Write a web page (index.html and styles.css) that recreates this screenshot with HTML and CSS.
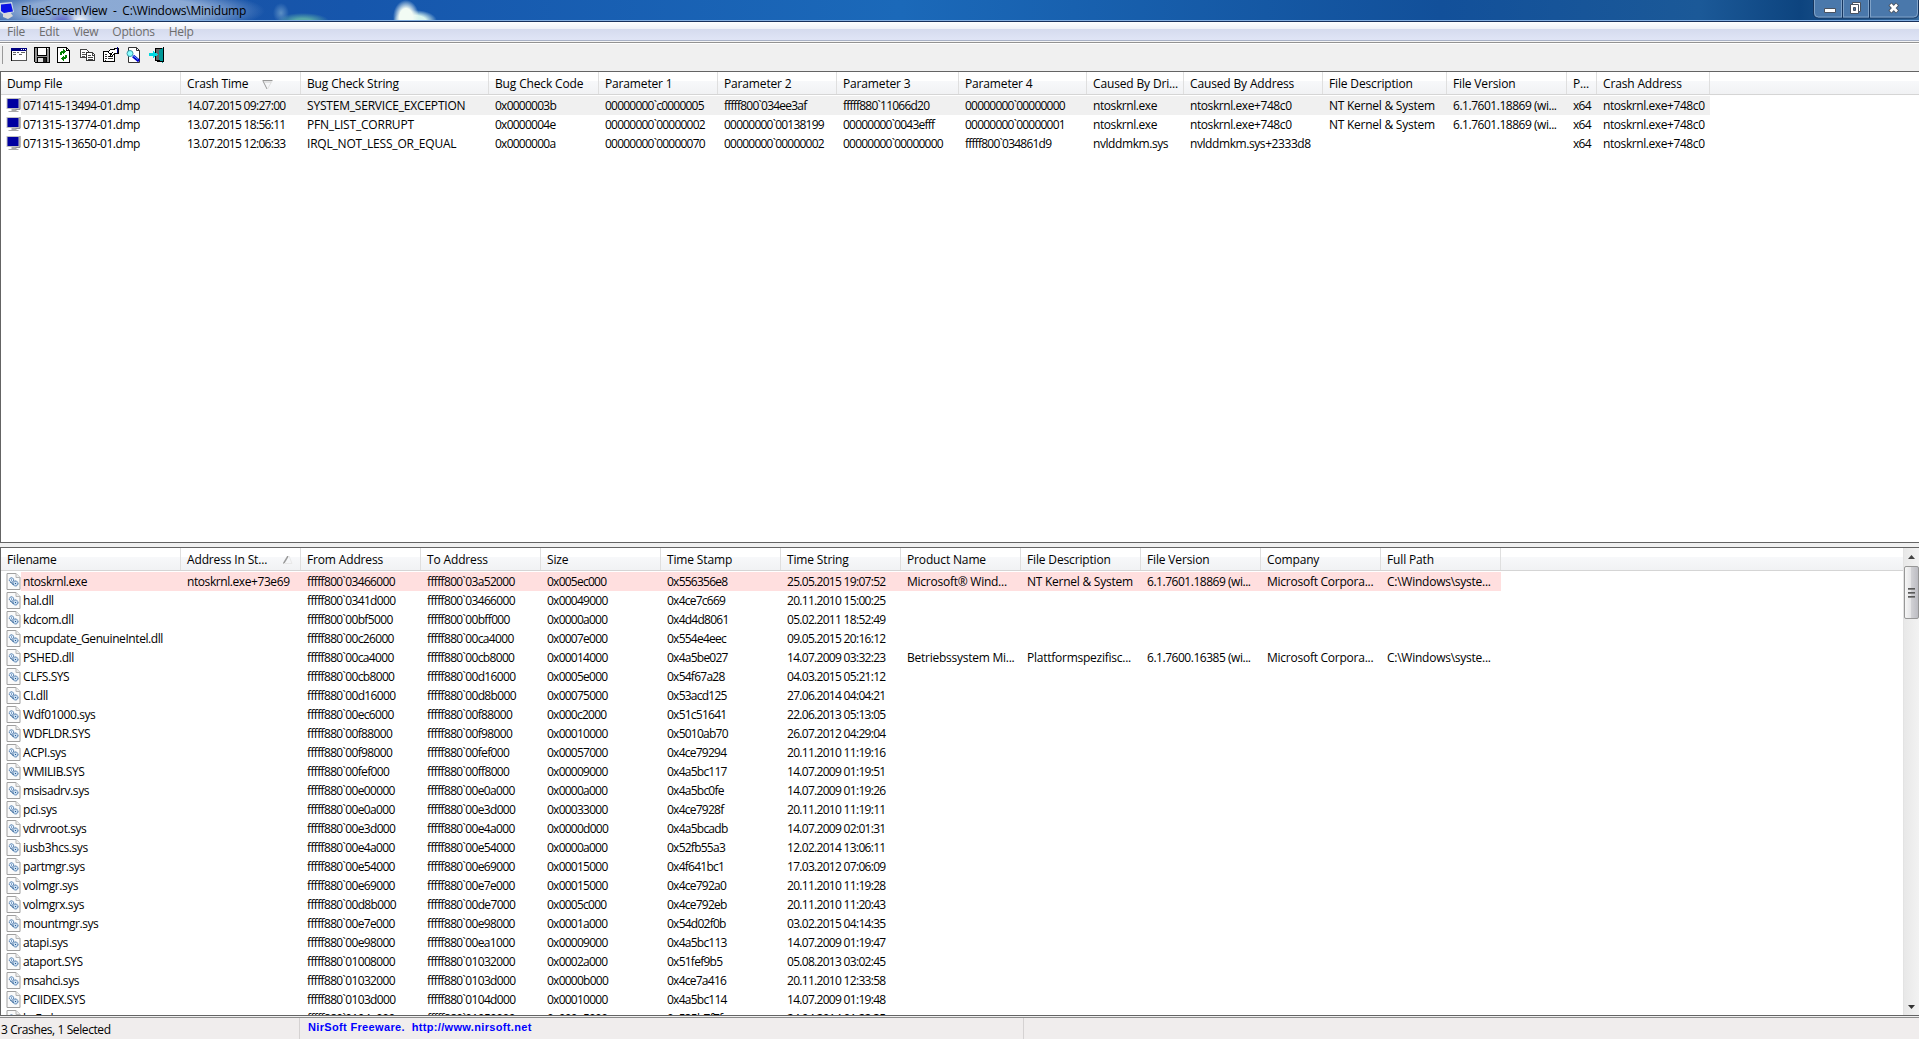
FILE: index.html
```html
<html>
<head>
    <meta charset="utf-8">
    <title>BlueScreenView</title>
    <link rel="stylesheet" href="styles.css">
</head>
<body>
    <svg class="sprites">
        <symbol id="monitor" viewBox="0 0 14 15">
            <path d="M0 0h14v11H0z" fill="#c0c0c0"/>
            <path d="M1 1h11v9H1z" fill="#0000a0"/>
            <path d="M5 11h5v2h2v1H2v-1h3z" fill="#aaa"/>
            <path d="M13.500 0v11.500H9" stroke="#909090" fill="none"/>
        </symbol>
        <symbol id="dll" viewBox="0 0 14 17">
            <path d="M.5.5h9l4 4v12H.5z" fill="#fafafa" stroke="#a0a0a0"/>
            <path d="M9.500.5v4h4" fill="#eee" stroke="#b4b4b4"/>
            <circle cx="5" cy="7" r="2.200" fill="#e6f2ff" stroke="#2b609a" stroke-dasharray="1.300 .5"/>
            <circle cx="9" cy="10.500" r="2.500" fill="#c9ddf0" stroke="#2b609a" stroke-dasharray="1.300 .5"/>
            <path d="M5 6.500v1M8.500 10.500h1M4 9l3 3" stroke="#275b93"/>
        </symbol>
    </svg>

    <div class="titlebar">
        <svg class="app-icon" width="15" height="19" viewBox="0 0 15 19">
            <path d="M0 3L12 2l2 10-10 3-4-3z" fill="#c9d6e8"/>
            <path d="M1 4.500L11 3.500l2 8L4 13 1 11z" fill="#0a12e4"/>
            <path d="M3 14l7-2 3 4-5 3-5-2z" fill="#d8d8d8"/>
        </svg>
        <span class="title">BlueScreenView&nbsp; -&nbsp; C:\Windows\Minidump</span>
        <svg class="win-buttons" width="106" height="20" viewBox="0 0 106 20">
            <path d="M.5 0v13q0 5 5 5h95q5 0 5-5V0" fill="#4a78ab" stroke="#17365f"/>
            <path d="M1.500 0v13q0 4 4 4h95q4 0 4-4V0M28.500 0v17M30.500 0v17M55.500 0v17M57.500 0v17" fill="none" stroke="#7fa2c8"/>
            <path d="M29.500 0v18M56.500 0v18" stroke="#17365f"/>
            <path d="M11.500 8.500h11v4h-11z" fill="#fff" stroke="#4a5361"/>
            <path d="M39.500 2.500h8v9h-8z" fill="#fff" stroke="#4a5361"/>
            <path d="M37.500 4.500h8v9h-8z" fill="#fff" stroke="#4a5361"/>
            <path d="M40.500 7.500h2v3h-2z" fill="#4a78ab" stroke="#4a5361"/>
            <path d="M77 4l7.500 8M84.500 4L77 12" stroke="#4a5361" stroke-width="4.500"/>
            <path d="M77.500 4.500l6.500 7M84 4.500l-6.500 7" stroke="#fff" stroke-width="2.600"/>
        </svg>
    </div>

    <div class="menubar">
        <span>File</span>
        <span>Edit</span>
        <span>View</span>
        <span>Options</span>
        <span>Help</span>
    </div>

    <div class="toolbar">
        <svg width="16" height="16" shape-rendering="crispEdges">
            <path d="M.5 1.500h15v12H.5z" fill="#fff" stroke="#000"/>
            <path d="M0 1h16v3H0z" fill="#000080"/>
            <path d="M15.500 3v11M1 13.500h15" stroke="#555"/>
            <path d="M2 5.500h3M6 5.500h2M10 5.500h4M2 7.500h3M8 7.500h3" stroke="#666"/>
            <path d="M10 2.500h1M12 2.500h1M14 2.500h1" stroke="#fff"/>
        </svg>
        <svg width="16" height="16" shape-rendering="crispEdges">
            <path d="M0 0h16v16H1L0 15z" fill="#000"/>
            <path d="M1 1h2v8h10V1h2v14H1z" fill="#909090"/>
            <path d="M4 0h8v8H4z" fill="#fff"/>
            <path d="M4 .5h8" stroke="#000"/>
            <path d="M3.500 10.500h9v5h-9z" fill="#ddd" stroke="#000"/>
            <path d="M9 11h3v4H9z" fill="#222"/>
            <path d="M13 1h1v1h-1z" fill="#fff"/>
        </svg>
        <svg width="16" height="16" shape-rendering="crispEdges">
            <path d="M.5.5h9l3 3v12H.5z" fill="#fff" stroke="#000"/>
            <path d="M9.500 0v3.500H13" fill="none" stroke="#000"/>
            <path d="M3 8V5h1V4h2V2h1v1h1v1h1v1H8v1H7v1H6V6H5v2zM10 8v3H9v1H7v2H6v-1H5v-1H4v-1h1v-1h1V9h1v1h1V8z" fill="#008000"/>
        </svg>
        <svg width="16" height="16" shape-rendering="crispEdges">
            <path d="M.5 2.500h6l2 2v6h-8z" fill="#fff" stroke="#444"/>
            <path d="M2 5.500h3M2 7.500h4M2 9.500h3" stroke="#555"/>
            <path d="M6.500 5.500h6l2 2v6h-8z" fill="#fff" stroke="#333"/>
            <path d="M8 8.500h3M8 10.500h5M8 12.500h5M12.500 5v3H15" stroke="#444" fill="none"/>
        </svg>
        <svg width="16" height="16" shape-rendering="crispEdges">
            <path d="M.5 4.500h11v10H.5z" fill="#fff" stroke="#000"/>
            <path d="M2 7.500h2M5 9.500h5M2 9.500h2M2 11.500h2M5 11.500h5M2 13.500h1" stroke="#333"/>
            <path d="M5 5l3-3h3V1h4v5h-3L9 9H7l2-3-2 1z" fill="#fff" stroke="#000"/>
            <path d="M14 0h1v6h-1z" fill="#000080"/>
        </svg>
        <svg width="16" height="16">
            <path d="M2.500.5h8l3 3v12h-11z" fill="#fff" stroke="#333"/>
            <path d="M10.500.5v3h3" fill="none" stroke="#333"/>
            <circle cx="4" cy="6.500" r="3" fill="#8ff" stroke="#3a9aa8"/>
            <path d="M7 9l6 5" stroke="#0000d0" stroke-width="3"/>
            <path d="M7 8.500l5 4" stroke="#58b0f0"/>
        </svg>
        <svg width="16" height="16" shape-rendering="crispEdges">
            <path d="M6.500 1.500h7v12h-7z" fill="#666" stroke="#000"/>
            <path d="M10 3l4-2v15l-4-3z" fill="#009898"/>
            <path d="M14.500 0v14M8 14.500h7" stroke="#000"/>
            <path d="M0 6h4V4l5 3.500L4 11V9H0z" fill="#00d8e0"/>
        </svg>
    </div>

    <div class="list crashes">
        <div class="header" id="crash-header"></div>
        <div class="rows" id="crash-rows"></div>
    </div>

    <div class="splitter"></div>

    <div class="list drivers">
        <div class="pane">
            <div class="header" id="driver-header"></div>
            <div class="rows" id="driver-rows"></div>
        </div>
        <div class="scrollbar">
            <svg width="7" height="4"><path d="M0 4L3.500 0 7 4z" fill="#444"/></svg>
            <div class="thumb"><i></i><i></i><i></i></div>
            <svg class="down" width="7" height="4"><path d="M0 0l3.500 4L7 0z" fill="#333"/></svg>
        </div>
    </div>

    <div class="statusbar">
        <div class="status-count">3 Crashes, 1 Selected</div>
        <div class="status-link">NirSoft Freeware.&nbsp; http://www.nirsoft.net</div>
        <div class="status-rest"></div>
    </div>

    <script src="lists.js"></script>
</body>
</html>
```

FILE: lists.js
```js
// title, column width, cell class
var crashColumns = [
    ["Dump File", 180, "dump"],
    ["Crash Time", 120, "time"],
    ["Bug Check String", 188, "bugcheck"],
    ["Bug Check Code", 110, "hex"],
    ["Parameter 1", 119, "addr"],
    ["Parameter 2", 119, "addr"],
    ["Parameter 3", 122, "addr"],
    ["Parameter 4", 128, "addr"],
    ["Caused By Dri...", 97, "module"],
    ["Caused By Address", 139, "module"],
    ["File Description", 124, "text"],
    ["File Version", 120, "version"],
    ["P...", 30, "hex"],
    ["Crash Address", 113, "module"]
];

var crashes = [
    "071415-13494-01.dmp|14.07.2015 09:27:00|SYSTEM_SERVICE_EXCEPTION|0x0000003b|00000000`c0000005|fffff800`034ee3af|fffff880`11066d20|00000000`00000000|ntoskrnl.exe|ntoskrnl.exe+748c0|NT Kernel & System|6.1.7601.18869 (wi...|x64|ntoskrnl.exe+748c0",
    "071315-13774-01.dmp|13.07.2015 18:56:11|PFN_LIST_CORRUPT|0x0000004e|00000000`00000002|00000000`00138199|00000000`0043efff|00000000`00000001|ntoskrnl.exe|ntoskrnl.exe+748c0|NT Kernel & System|6.1.7601.18869 (wi...|x64|ntoskrnl.exe+748c0",
    "071315-13650-01.dmp|13.07.2015 12:06:33|IRQL_NOT_LESS_OR_EQUAL|0x0000000a|00000000`00000070|00000000`00000002|00000000`00000000|fffff800`034861d9|nvlddmkm.sys|nvlddmkm.sys+2333d8|||x64|ntoskrnl.exe+748c0"
];

var driverColumns = [
    ["Filename", 180, "module"],
    ["Address In St...", 120, "module"],
    ["From Address", 120, "addr"],
    ["To Address", 120, "addr"],
    ["Size", 120, "hex"],
    ["Time Stamp", 120, "hex"],
    ["Time String", 120, "time"],
    ["Product Name", 120, "text"],
    ["File Description", 120, "text"],
    ["File Version", 120, "version"],
    ["Company", 120, "text"],
    ["Full Path", 120, "text"]
];

var drivers = [
    "ntoskrnl.exe|ntoskrnl.exe+73e69|fffff800`03466000|fffff800`03a52000|0x005ec000|0x556356e8|25.05.2015 19:07:52|Microsoft® Wind...|NT Kernel & System|6.1.7601.18869 (wi...|Microsoft Corpora...|C:\\Windows\\syste...",
    "hal.dll||fffff800`0341d000|fffff800`03466000|0x00049000|0x4ce7c669|20.11.2010 15:00:25",
    "kdcom.dll||fffff800`00bf5000|fffff800`00bff000|0x0000a000|0x4d4d8061|05.02.2011 18:52:49",
    "mcupdate_GenuineIntel.dll||fffff880`00c26000|fffff880`00ca4000|0x0007e000|0x554e4eec|09.05.2015 20:16:12",
    "PSHED.dll||fffff880`00ca4000|fffff880`00cb8000|0x00014000|0x4a5be027|14.07.2009 03:32:23|Betriebssystem Mi...|Plattformspezifisc...|6.1.7600.16385 (wi...|Microsoft Corpora...|C:\\Windows\\syste...",
    "CLFS.SYS||fffff880`00cb8000|fffff880`00d16000|0x0005e000|0x54f67a28|04.03.2015 05:21:12",
    "CI.dll||fffff880`00d16000|fffff880`00d8b000|0x00075000|0x53acd125|27.06.2014 04:04:21",
    "Wdf01000.sys||fffff880`00ec6000|fffff880`00f88000|0x000c2000|0x51c51641|22.06.2013 05:13:05",
    "WDFLDR.SYS||fffff880`00f88000|fffff880`00f98000|0x00010000|0x5010ab70|26.07.2012 04:29:04",
    "ACPI.sys||fffff880`00f98000|fffff880`00fef000|0x00057000|0x4ce79294|20.11.2010 11:19:16",
    "WMILIB.SYS||fffff880`00fef000|fffff880`00ff8000|0x00009000|0x4a5bc117|14.07.2009 01:19:51",
    "msisadrv.sys||fffff880`00e00000|fffff880`00e0a000|0x0000a000|0x4a5bc0fe|14.07.2009 01:19:26",
    "pci.sys||fffff880`00e0a000|fffff880`00e3d000|0x00033000|0x4ce7928f|20.11.2010 11:19:11",
    "vdrvroot.sys||fffff880`00e3d000|fffff880`00e4a000|0x0000d000|0x4a5bcadb|14.07.2009 02:01:31",
    "iusb3hcs.sys||fffff880`00e4a000|fffff880`00e54000|0x0000a000|0x52fb55a3|12.02.2014 13:06:11",
    "partmgr.sys||fffff880`00e54000|fffff880`00e69000|0x00015000|0x4f641bc1|17.03.2012 07:06:09",
    "volmgr.sys||fffff880`00e69000|fffff880`00e7e000|0x00015000|0x4ce792a0|20.11.2010 11:19:28",
    "volmgrx.sys||fffff880`00d8b000|fffff880`00de7000|0x0005c000|0x4ce792eb|20.11.2010 11:20:43",
    "mountmgr.sys||fffff880`00e7e000|fffff880`00e98000|0x0001a000|0x54d02f0b|03.02.2015 04:14:35",
    "atapi.sys||fffff880`00e98000|fffff880`00ea1000|0x00009000|0x4a5bc113|14.07.2009 01:19:47",
    "ataport.SYS||fffff880`01008000|fffff880`01032000|0x0002a000|0x51fef9b5|05.08.2013 03:02:45",
    "msahci.sys||fffff880`01032000|fffff880`0103d000|0x0000b000|0x4ce7a416|20.11.2010 12:33:58",
    "PCIIDEX.SYS||fffff880`0103d000|fffff880`0104d000|0x00010000|0x4a5bc114|14.07.2009 01:19:48",
    "hcFsd.sys||fffff880`0104a000|fffff880`01050000|0x000a5000|0x535b7f7f|24.04.2014 01:22:35"
];

function fillHeader(id, columns, sortArrow) {
    let header = document.getElementById(id);

    columns.forEach(function (col, i) {
        let cell = document.createElement("div");
        cell.classList.add("col");
        cell.style.width = col[1] + "px";
        cell.innerText = col[0];

        if (i == 1) {cell.insertAdjacentHTML("beforeend", sortArrow);}

        header.appendChild(cell);
    });
}

function fillRows(id, columns, data, icon) {
    let rows = document.getElementById(id);

    for (const line of data) {
        let row = document.createElement("div");
        row.classList.add("row");

        line.split("|").forEach(function (value, i) {
            let cell = document.createElement("div");
            cell.className = "cell " + columns[i][2];
            cell.style.width = columns[i][1] + "px";

            let label = document.createElement("span");
            label.innerText = value;

            if (i == 0) {
                cell.classList.add("first");
                cell.innerHTML = '<svg class="' + icon + '"><use href="#' + icon + '"/></svg>';
            }

            cell.appendChild(label);
            row.appendChild(cell);
        });

        rows.appendChild(row);
    }
}

fillHeader("crash-header", crashColumns, '<svg class="sort" width="11" height="10"><path d="M.5.5h10M1 1l4 8" stroke="#999" fill="none"/><path d="M2 2h7" stroke="#ccc"/><path d="M10 1L5.500 9" stroke="#e0e0e0"/></svg>');
fillHeader("driver-header", driverColumns, '<svg class="sort up" width="10" height="8"><path d="M.5 7.500L5 0" stroke="#999" stroke-width="1.500"/><path d="M6 0l3 7.500H1" stroke="#e8e8e8" fill="none"/></svg>');
fillRows("crash-rows", crashColumns, crashes, "monitor");
fillRows("driver-rows", driverColumns, drivers, "dll");
```

FILE: styles.css
```css
:root {
    --face: #f0f0f0;
    --line: #646464;
    --ui-font: "Open Sans", "Noto Sans", sans-serif;
}

* {
    box-sizing: border-box;
    margin: 0px;
    padding: 0px;
}

body {
    display: flex;
    flex-direction: column;
    height: 1039px;
    overflow: hidden;

    background-color: var(--face);
    color: #000;
    font-family: var(--ui-font);
    font-size: 12px;
    white-space: nowrap;
}

.sprites {
    position: absolute;
    width: 0px;
    height: 0px;
}

.titlebar {
    display: flex;
    align-items: flex-start;
    flex: none;
    height: 22px;

    border-bottom: 1px solid #17305c;
    box-shadow: inset 0 -1px #82aee0;
    background:
        radial-gradient(ellipse 14px 10px at 62px 22px, #5a58c8, transparent),
        radial-gradient(ellipse 14px 14px at 80px 22px, #fff, transparent),
        radial-gradient(ellipse 150px 24px at 115px 11px, #9db7dbdd 60%, transparent),
        radial-gradient(ellipse 13px 17px at 406px 17px, #f2fbf4 50%, transparent),
        radial-gradient(ellipse 22px 11px at 415px 21px, #d8f4ee 50%, transparent),
        radial-gradient(ellipse 26px 8px at 303px 21px, #58a8a8 30%, transparent),
        radial-gradient(ellipse 8px 10px at 281px 13px, #5c8fc4, transparent),
        linear-gradient(to right, #1c50a2, #1656ac 350px, #1b69b9 900px, #12509a 1440px, #1b5998 1700px, #0d447f 1800px, #366b9f);
}

.title {
    flex: 1;
    margin-left: 6px;
    line-height: 22px;
    letter-spacing: -0.22px;
}

.win-buttons {
    margin-right: 0px;
}

.menubar {
    display: flex;
    flex: none;
    gap: 14px;
    height: 21px;
    padding-left: 7px;

    background: linear-gradient(#fff, #eef1f8 7px, #d5dbee 7px, #e0e5f6 18px, #a9b2c6 18px, #a9b2c6 19px, #f4f4f4 19px, #f4f4f4 20px, #929292 20px);
    color: #6d6d6d;
    line-height: 20px;
    letter-spacing: -0.27px;
}

.toolbar {
    display: flex;
    flex: none;
    gap: 7px;
    height: 28px;
    padding: 3px 0px 0px 8px;

    border-top: 1px solid #fff;
}

.toolbar::before {
    content: "";
    width: 1px;
    height: 18px;
    margin: -1px -6px 0px -6px;
    background-color: #999;
}

.toolbar svg:first-of-type {
    margin-left: 7px;
}

.list {
    flex: none;

    border-top: 1px solid var(--line);
    border-bottom: 1px solid var(--line);
    border-left: 1px solid var(--line);
    background-color: #fff;
    overflow: hidden;
}

.crashes {
    height: 472px;
}

.splitter {
    flex: none;
    height: 4px;
}

.drivers {
    display: flex;
    height: 469px;
}

.pane {
    flex: 1;
    overflow: hidden;
}

.header {
    display: flex;
    height: 23px;

    border-bottom: 1px solid #d5d5d5;
    background: linear-gradient(#fff 9px, #f7f8fa 9px, #f1f2f4);
}

.col {
    display: flex;
    flex: none;
    padding-left: 6px;

    border-right: 1px solid #dfdfdf;
    line-height: 23px;
    letter-spacing: -0.15px;
}

.sort {
    margin: 8px 0px 0px 14px;
}

.sort.up {
    margin-left: 16px;
}

.rows {
    padding-top: 1px;
}

.row {
    display: flex;
    width: max-content;
    height: 19px;
}

.cell {
    flex: none;
    padding-left: 6px;
    line-height: 19px;
    letter-spacing: -0.25px;
}

.first {
    display: flex;
    padding-left: 5px;
}

.first span {
    flex: 1;
    padding-left: 2px;
}

.monitor {
    flex: none;
    width: 15px;
    height: 15px;
    margin-top: 2px;
}

.dll {
    flex: none;
    width: 15px;
    height: 17px;
    margin-top: 1px;
}

.module {
    letter-spacing: -0.42px;
}

.dump {
    letter-spacing: -0.47px;
}

.bugcheck {
    letter-spacing: -0.2px;
}

.addr {
    letter-spacing: -0.78px;
}

.drivers .addr {
    letter-spacing: -0.65px;
}

.hex {
    letter-spacing: -0.75px;
}

.time {
    letter-spacing: -0.7px;
}

.version {
    letter-spacing: -0.47px;
}

/* the icon cell stays white on highlighted rows */
.row:first-child .first span,
.row:first-child .cell:not(.first) {
    background-color: #f0f0f0;
}

.drivers .row:first-child .first span,
.drivers .row:first-child .cell:not(.first) {
    background-color: #ffdfdf;
}

.scrollbar {
    display: flex;
    flex-direction: column;
    align-items: center;
    flex: none;
    width: 16px;
    padding-top: 7px;

    border-left: 1px solid #e3e3e3;
    background: linear-gradient(to right, #e8e8e8, #f2f2f2);
}

.thumb {
    display: flex;
    flex-direction: column;
    align-items: center;
    justify-content: center;
    gap: 2px;
    width: 15px;
    height: 53px;
    margin-top: 7px;

    border: 1px solid #979797;
    border-radius: 2px;
    background: linear-gradient(to right, #f6f6f6, #e4e4e6 45%, #d0d0d4 50%, #bcbcc2);
}

.thumb i {
    width: 7px;
    height: 2px;
    background: linear-gradient(#444, #999);
}

.down {
    margin-top: auto;
    margin-bottom: 6px;
}

.statusbar {
    display: flex;
    flex: 1;
    margin-top: 1px;

    border-top: 1px solid #8c8c8c;
    background-color: #f0eded;
}

.status-count {
    width: 300px;
    padding-left: 1px;

    border-right: 1px solid #d5d2d2;
    line-height: 24px;
    letter-spacing: -0.4px;
}

.status-link {
    width: 724px;
    padding-left: 8px;

    border-right: 1px solid #d5d2d2;
    color: #00f;
    font-family: "Liberation Sans", sans-serif;
    font-size: 11px;
    font-weight: bold;
    line-height: 19px;
    letter-spacing: 0.34px;
}
```
